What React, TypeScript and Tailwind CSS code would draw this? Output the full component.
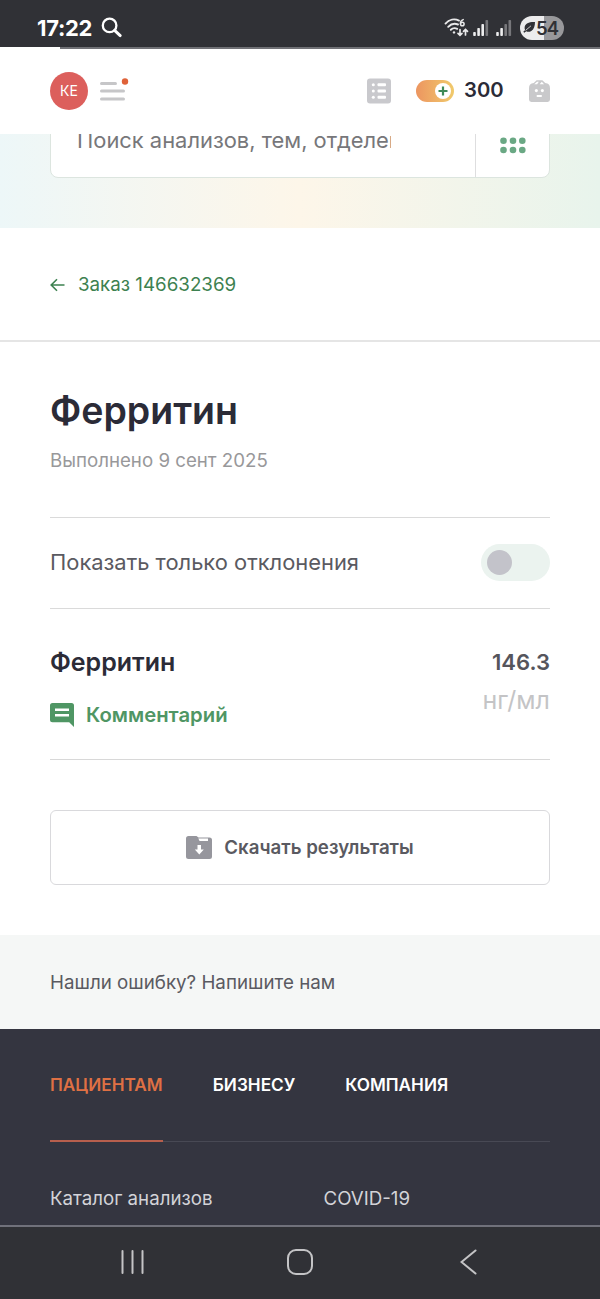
import {useState} from 'react';

const footerTabs = ['ПАЦИЕНТАМ', 'БИЗНЕСУ', 'КОМПАНИЯ'];

function WifiIcon() {
    return (
        <svg width="26" height="20" viewBox="0 0 26 20" fill="none" stroke="#e9e9ea" strokeWidth="1.9" strokeLinecap="round">
            <path d="M1.5 5.6C5.2 1.4 10.6.6 15 2.6"/>
            <path d="M4.2 8.8C7 5.9 11 5.3 14 6.5"/>
            <path d="M6.8 11.8c1.8-1.7 4.3-2 6.4-1"/>
            <circle cx="10" cy="14.4" r="1.2" fill="#e9e9ea" stroke="none"/>
            <path d="M19.2 1.6C17.2 2.3 16.4 4 16.5 5.6" strokeWidth="1.5"/>
            <circle cx="18.3" cy="6" r="1.8" strokeWidth="1.5"/>
            <path d="M16 11.500v5.500M14 15.300l2 2 2-2M21.5 17v-5.500M19.5 13.400l2-2 2 2" strokeWidth="1.7"/>
        </svg>
    );
}

function SignalIcon({level}: { level: number }) {
    const bars = [4, 8, 12, 16];
    return (
        <svg width="16" height="16" viewBox="0 0 16 16">
            {bars.map((height, i) => (
                <rect key={height} x={i * 4.1 + 0.2} y={16 - height} width="2.6" height={height} rx="0.8"
                      fill={i < level ? '#ededee' : '#77777b'}/>
            ))}
        </svg>
    );
}

function StatusBar() {
    return (
        <div className="flex h-[47px] items-center bg-[#303136] pt-2 pr-9 pl-[37px] text-white">
            <span className="w-[64px] text-[22px] leading-[38px] font-bold tracking-[-0.3px]">17:22</span>
            <svg width="22" height="22" viewBox="0 0 22 22" fill="none" stroke="#fff" strokeWidth="2.3" strokeLinecap="round">
                <circle cx="8.6" cy="8.4" r="6.8"/>
                <path d="M13.6 13.4l5.6 5.2" strokeWidth="3"/>
            </svg>
            <div className="ml-auto flex items-center">
                <WifiIcon/>
                <div className="ml-[3px]"><SignalIcon level={3}/></div>
                <div className="ml-[7px]"><SignalIcon level={2}/></div>
                <div className="ml-2 flex h-[24px] w-11 items-center overflow-hidden rounded-full bg-linear-to-r from-[#ececed] from-54% to-[#98989b] to-54% pl-[3px] text-[#303136]">
                    <svg width="13" height="13" viewBox="0 0 13 13" fill="#303136">
                        <path d="M12 1C7 .6 2 2 1.6 6.4c-.1 1 .1 1.9.5 2.6L.3 10.800l1 1 2-1.600c1.200 1 3.400.8 5-.2C11 8.200 12 5 12 1z"/>
                        <path d="M2.600 9.400L8 4.800" stroke="#ececed" strokeWidth=".8"/>
                    </svg>
                    <span className="text-[18.5px] leading-[22px] font-semibold tracking-[-0.8px]">54</span>
                </div>
            </div>
        </div>
    );
}

function Header() {
    return (
        <header className="flex h-[87px] flex-col bg-white">
            <div className="ml-[60px] h-[2px] bg-[#707176]"/>
            <div className="flex flex-1 items-center px-[50px] pb-[2px]">
                <div className="flex size-[38px] items-center justify-center rounded-full bg-[#dc5f5c] text-[14px] text-white">
                    КЕ
                </div>
                <svg className="ml-3" width="30" height="30" viewBox="0 0 30 30">
                    <g fill="#c6c6c8">
                        <rect x="0" y="6" width="17" height="3" rx="1.5"/>
                        <rect x="0" y="13.5" width="25" height="3" rx="1.5"/>
                        <rect x="0" y="21.5" width="25" height="3" rx="1.5"/>
                    </g>
                    <circle cx="25" cy="5.5" r="3.2" fill="#df6239"/>
                </svg>
                <div className="ml-auto flex items-center">
                    <svg width="24" height="26" viewBox="0 0 24 26">
                        <rect y="0.5" width="24" height="25" rx="3" fill="#c9c9cd"/>
                        <g fill="#fff">
                            <circle cx="6.3" cy="6.8" r="1.5"/>
                            <circle cx="6.3" cy="13" r="1.5"/>
                            <circle cx="6.3" cy="19.2" r="1.5"/>
                            <rect x="10.5" y="5.3" width="8.500" height="3" rx="1"/>
                            <rect x="10.5" y="11.5" width="8.500" height="3" rx="1"/>
                            <rect x="10.5" y="17.7" width="8.500" height="3" rx="1"/>
                        </g>
                    </svg>
                    <div className="ml-[25px] flex h-[22px] w-[38px] items-center justify-end rounded-full bg-linear-to-r from-[#ec9560] to-[#f0ca6c] pr-[3px]">
                        <svg width="16" height="16" viewBox="0 0 16 16">
                            <circle cx="8" cy="8" r="8" fill="#fff"/>
                            <path d="M8 3.5v9M3.5 8h9" stroke="#3f8a58" strokeWidth="2.2"/>
                        </svg>
                    </div>
                    <span className="ml-[10px] w-[65px] text-[20.3px] font-semibold text-[#2b2b37]">300</span>
                    <svg width="21" height="24" viewBox="0 0 22 24">
                        <path d="M5 3.600L8 .8h6l3 2.800c3.500.6 5 2 5 5.400v12a2.5 2.5 0 0 1-2.5 2.5h-17A2.5 2.5 0 0 1 0 21V9c0-3.400 1.500-4.800 5-5.400z" fill="#c9c9cb"/>
                        <path d="M5.500 4.900h3l1.800-2.700H8.400zM11.200 4.900h4.600l-2.400-2.700z" fill="#fff"/>
                        <g fill="#fff">
                            <circle cx="7.7" cy="11.6" r="1.6"/>
                            <circle cx="14" cy="11.6" r="1.6"/>
                            <rect x="8" y="16.2" width="5.5" height="2" rx=".6"/>
                        </g>
                    </svg>
                </div>
            </div>
        </header>
    );
}

function SearchHero() {
    return (
        <div className="flex h-[94px] items-end overflow-hidden bg-linear-to-r from-[#edf7f8] via-[#fdf6e9] to-[#e8f4ec] px-[50px] pb-[50px]">
            <div className="flex h-[76px] flex-1 rounded-lg border border-[#dce5df] bg-white">
                <div className="flex flex-1 items-center pt-px pl-[26px]">
                    <div className="w-[314px] overflow-hidden text-[21.9px] whitespace-nowrap text-[#77777a]">
                        Поиск анализов, тем, отделений
                    </div>
                </div>
                <div className="flex w-[74px] items-center justify-center border-l border-[#dededf] pt-[10px]">
                    <svg width="26" height="17" viewBox="0 0 26 17" fill="#6aa884">
                        {[3.5, 13, 22.3].map((x) => (
                            <g key={x}>
                                <circle cx={x} cy="3.7" r="3.3"/>
                                <circle cx={x} cy="13" r="3.3"/>
                            </g>
                        ))}
                    </svg>
                </div>
            </div>
        </div>
    );
}

function Result() {
    const [onlyDeviations, setOnlyDeviations] = useState(false);

    return (
        <main className="px-[50px]">
            <h1 className="pt-[45px] text-[37.5px] leading-[48px] font-semibold text-[#2b2b37]">Ферритин</h1>
            <p className="mt-3 text-[18.7px] leading-[28px] text-[#98989a]">Выполнено 9 сент 2025</p>

            <div className="mt-[42px] flex h-[92px] items-center justify-between border-y border-[#dadada] pb-[2px]">
                <span className="text-[21.9px] text-[#5a5a61]">Показать только отклонения</span>
                <button
                    type="button"
                    role="switch"
                    aria-checked={onlyDeviations}
                    onClick={() => setOnlyDeviations(!onlyDeviations)}
                    className="flex h-[37px] w-[69px] items-center rounded-full bg-[#ebf3ef] px-1.5"
                >
                    <span className={onlyDeviations ? 'ml-auto size-[25px] rounded-full bg-[#4f9664]' : 'size-[25px] rounded-full bg-[#c3c3ca]'}/>
                </button>
            </div>

            <div className="flex h-[151px] justify-between border-b border-[#d8d8d8] pt-[36px]">
                <div>
                    <h2 className="text-[25px] leading-[34px] font-semibold text-[#2b2b37]">Ферритин</h2>
                    <a href="#" className="mt-[22px] flex items-center gap-3 text-[20.3px] leading-[28px] font-semibold text-[#4f9664]">
                        <svg width="24" height="24" viewBox="0 0 24 24" fill="#4f9664">
                            <path d="M2.5 0h19A2.5 2.5 0 0 1 24 2.5V24l-4.8-4.8H2.5A2.5 2.5 0 0 1 0 16.7V2.5A2.5 2.5 0 0 1 2.5 0z"/>
                            <path d="M5 6.800h14M5 12.300h14" stroke="#fff" strokeWidth="2.6"/>
                        </svg>
                        Комментарий
                    </a>
                </div>
                <div className="text-right">
                    <p className="text-[22.1px] leading-[34px] font-semibold text-[#55555c]">146.3</p>
                    <p className="mt-[5px] text-[25px] leading-[32px] text-[#c4c4c6]">нг/мл</p>
                </div>
            </div>

            <button
                type="button"
                className="mt-[50px] flex h-[75px] w-full items-center justify-center gap-3 rounded-md border border-[#d9d9dc] text-[18.7px] font-semibold text-[#5a5a61]"
            >
                <svg width="26" height="23" viewBox="0 0 26 23">
                    <path d="M2.5 0h8l2 1.500h11A2.5 2.5 0 0 1 26 4v16.500a2.5 2.5 0 0 1-2.5 2.5h-21A2.5 2.5 0 0 1 0 20.5v-18A2.5 2.5 0 0 1 2.5 0z" fill="#96969d"/>
                    <path d="M12.3 2.500h9.700v2.500h-8.400z" fill="#fff"/>
                    <path d="M11.500 9h3.500v4.500h2.800l-4.500 5-4.500-5h2.700z" fill="#fff"/>
                </svg>
                <span className="pt-px">Скачать результаты</span>
            </button>
        </main>
    );
}

function Footer() {
    return (
        <footer className="h-[197px] bg-[#343540] px-[50px]">
            <nav className="flex h-[113px] gap-[50px] border-b border-[#484954] text-[17.2px] leading-[24px] font-semibold text-white">
                {footerTabs.map((tab, i) => (
                    <a
                        key={tab}
                        href="#"
                        className={i === 0 ? 'h-[113px] border-b-2 border-[#b75f4d] pt-[44px] text-[#df7044]' : 'pt-[44px]'}
                    >
                        {tab}
                    </a>
                ))}
            </nav>
            <div className="grid grid-cols-[273.500px_1fr] pt-[43px] text-[18.7px] leading-[28px] text-[#d3d3d8]">
                <a href="#">Каталог анализов</a>
                <a href="#">COVID-19</a>
            </div>
        </footer>
    );
}

function NavigationBar() {
    return (
        <div className="-mt-px flex h-[75px] items-center justify-between border-t-2 border-[#70717b] bg-[#303136] px-[120px] pb-[4px]">
            <svg width="26" height="26" viewBox="0 0 26 26" stroke="#c4c4c6" strokeWidth="2" strokeLinecap="round">
                <path d="M2.5 2v22M12.5 2v22M22.5 2v22"/>
            </svg>
            <svg className="mr-[6px]" width="28" height="28" viewBox="0 0 28 28" fill="none" stroke="#c4c4c6" strokeWidth="2">
                <rect x="2" y="2" width="24" height="24" rx="8"/>
            </svg>
            <svg width="20" height="28" viewBox="0 0 20 28" fill="none" stroke="#c4c4c6" strokeWidth="2" strokeLinecap="round">
                <path d="M15.5 2.5L1.5 14l14 11.5"/>
            </svg>
        </div>
    );
}

export default function App() {
    return (
        <div className="h-[1299px] w-[600px] overflow-hidden bg-white font-['Inter','Liberation_Sans',sans-serif]">
            <StatusBar/>
            <Header/>
            <SearchHero/>
            <div className="flex h-[114px] items-center gap-[13px] border-b-2 border-[#e5e5e5] px-[50px] pt-[2px] text-[18.75px] text-[#3d8150]">
                <svg width="15" height="14" viewBox="0 0 15 14" fill="none" stroke="#3d8150" strokeWidth="1.6">
                    <path d="M14.5 7H1.5M7 1.2L1.2 7 7 12.8"/>
                </svg>
                <a href="#">Заказ 146632369</a>
            </div>
            <Result/>
            <div className="mt-[50px] flex h-[94px] items-center bg-[#f5f7f6] px-[50px] pt-[2px] text-[18.75px] text-[#5a5a61]">
                Нашли ошибку? Напишите нам
            </div>
            <Footer/>
            <NavigationBar/>
        </div>
    );
}
